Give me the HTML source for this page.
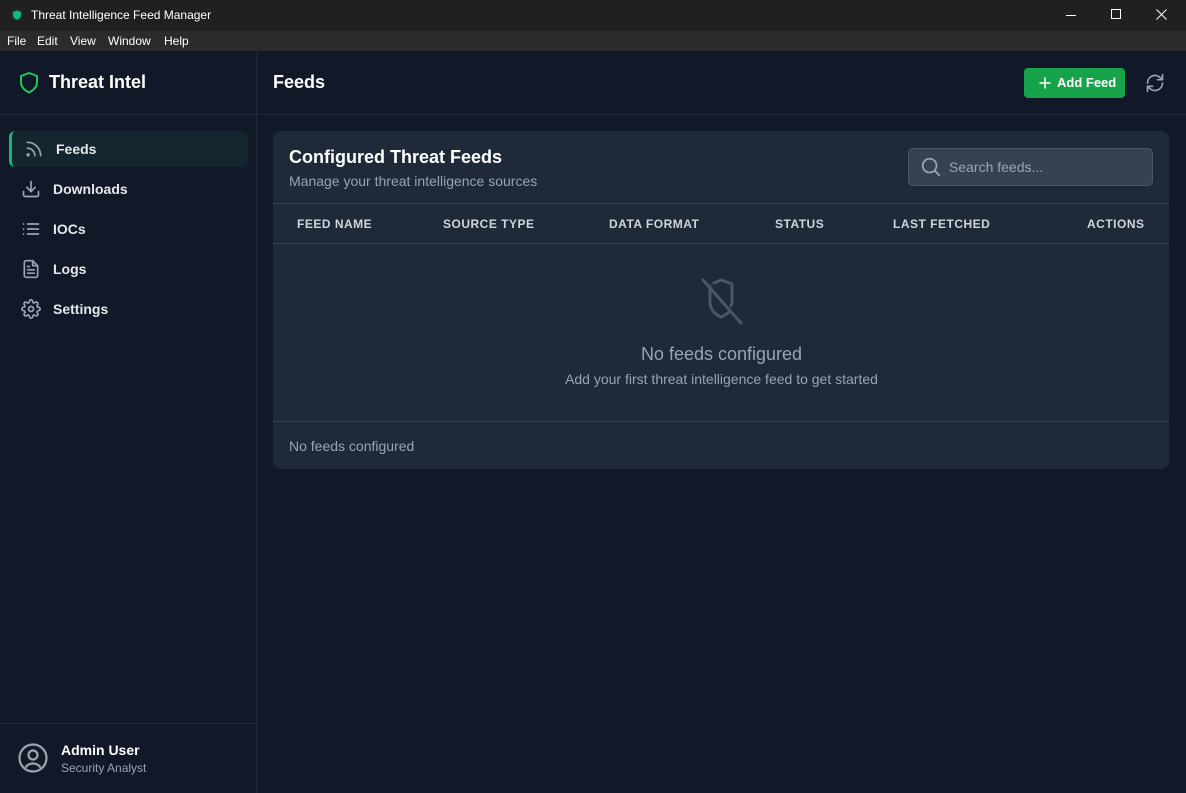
<!DOCTYPE html>
<html><head><meta charset="utf-8"><style>
*{margin:0;padding:0;box-sizing:border-box}
body{width:1186px;height:793px;overflow:hidden;background:#111827;font-family:"Liberation Sans",sans-serif;color:#fff;position:relative}
.tb{position:absolute;left:0;top:0;width:1186px;height:31px;background:#202020;font-size:12px;color:#fff}
.mb{position:absolute;left:0;top:31px;width:1186px;height:20px;background:#2b2b2e;font-size:12px;color:#fff}
.mb span{position:absolute;top:3px}
.sb{position:absolute;left:0;top:51px;width:257px;height:742px;border-right:1px solid #1f2937;background:#111827}
.main{position:absolute;left:257px;top:51px;right:0;bottom:0}
.nav{position:absolute;left:24px;font-size:14px;font-weight:bold;color:#e5e7eb}
.th{position:absolute;top:166px;font-size:12px;font-weight:bold;color:#d1d5db;letter-spacing:.5px}
</style></head><body>
<div class="tb">
<svg style="position:absolute;left:10px;top:8px" width="14" height="14" viewBox="0 0 14 14"><circle cx="7" cy="7" r="6.5" fill="#1e2a30"/><path d="M7 2.5 L11 4 V7 C11 9.5 9 11 7 11.8 C5 11 3 9.5 3 7 V4Z" fill="#10b981"/></svg>
<span style="position:absolute;left:31px;top:8px">Threat Intelligence Feed Manager</span>
<svg style="position:absolute;left:1066px;top:10px" width="12" height="12"><line x1="0" y1="5.5" x2="10" y2="5.5" stroke="#fff"/></svg>
<svg style="position:absolute;left:1111px;top:9px" width="12" height="12"><rect x="0.5" y="0.5" width="9" height="9" fill="none" stroke="#fff"/></svg>
<svg style="position:absolute;left:1156px;top:9px" width="12" height="12"><path d="M0.5 0.5L10.5 10.5M10.5 0.5L0.5 10.5" stroke="#fff"/></svg>
</div>
<div class="mb"><span style="left:7px">File</span><span style="left:37px">Edit</span><span style="left:70px">View</span><span style="left:108px">Window</span><span style="left:164px">Help</span></div>

<div class="sb">
<div style="position:absolute;left:0;top:63px;width:256px;border-top:1px solid #1f2937"></div>
<svg style="position:absolute;left:19px;top:20px" width="20" height="24" viewBox="0 0 20 24"><path d="M10 2 L18 5 V11 C18 16 14 19.5 10 21.5 C6 19.5 2 16 2 11 V5Z" fill="none" stroke="#22c55e" stroke-width="2" stroke-linejoin="round"/></svg>
<div style="position:absolute;left:49px;top:21px;font-size:18px;font-weight:bold">Threat Intel</div>
<div style="position:absolute;left:9px;top:80px;width:239px;height:36px;background:#13262d;border-radius:6px;border-left:3px solid #10b981"></div>
<svg style="position:absolute;left:24px;top:88px" width="20" height="20" viewBox="0 0 24 24" fill="none" stroke="#9ca3af" stroke-width="2" stroke-linecap="round"><path d="M4 11a9 9 0 0 1 9 9"/><path d="M4 4a16 16 0 0 1 16 16"/><circle cx="5" cy="19" r="1"/></svg>
<div class="nav" style="left:56px;top:90px">Feeds</div>
<svg style="position:absolute;left:21px;top:128px" width="20" height="20" viewBox="0 0 24 24" fill="none" stroke="#9ca3af" stroke-width="2" stroke-linecap="round" stroke-linejoin="round"><path d="M21 15v4a2 2 0 0 1-2 2H5a2 2 0 0 1-2-2v-4"/><path d="M7 10l5 5 5-5"/><path d="M12 15V3"/></svg>
<div class="nav" style="left:53px;top:130px">Downloads</div>
<svg style="position:absolute;left:21px;top:168px" width="20" height="20" viewBox="0 0 24 24" fill="none" stroke="#9ca3af" stroke-width="2" stroke-linecap="round"><path d="M8 6h13M8 12h13M8 18h13M3 6h.01M3 12h.01M3 18h.01"/></svg>
<div class="nav" style="left:53px;top:170px">IOCs</div>
<svg style="position:absolute;left:21px;top:208px" width="20" height="20" viewBox="0 0 24 24" fill="none" stroke="#9ca3af" stroke-width="2" stroke-linecap="round" stroke-linejoin="round"><path d="M14 2H6a2 2 0 0 0-2 2v16a2 2 0 0 0 2 2h12a2 2 0 0 0 2-2V8z"/><path d="M14 2v6h6M16 13H8M16 17H8M10 9H8"/></svg>
<div class="nav" style="left:53px;top:210px">Logs</div>
<svg style="position:absolute;left:21px;top:248px" width="20" height="20" viewBox="0 0 24 24" fill="none" stroke="#9ca3af" stroke-width="2"><circle cx="12" cy="12" r="3"/><path d="M19.4 15a1.65 1.65 0 0 0 .33 1.82l.06.06a2 2 0 1 1-2.83 2.830l-.06-.06a1.65 1.65 0 0 0-1.820-.33 1.65 1.65 0 0 0-1 1.51V21a2 2 0 0 1-4 0v-.09A1.65 1.65 0 0 0 9 19.4a1.65 1.65 0 0 0-1.82.33l-.06.06a2 2 0 1 1-2.83-2.83l.06-.06A1.65 1.65 0 0 0 4.68 15a1.65 1.65 0 0 0-1.51-1H3a2 2 0 0 1 0-4h.09A1.65 1.65 0 0 0 4.6 9a1.65 1.65 0 0 0-.33-1.82l-.06-.06a2 2 0 1 1 2.83-2.83l.06.06A1.65 1.65 0 0 0 9 4.68a1.65 1.65 0 0 0 1-1.51V3a2 2 0 0 1 4 0v.09a1.65 1.65 0 0 0 1 1.51 1.65 1.65 0 0 0 1.82-.33l.06-.06a2 2 0 1 1 2.83 2.83l-.06.06A1.65 1.65 0 0 0 19.4 9a1.65 1.65 0 0 0 1.51 1H21a2 2 0 0 1 0 4h-.09a1.65 1.65 0 0 0-1.51 1z"/></svg>
<div class="nav" style="left:53px;top:250px">Settings</div>
<div style="position:absolute;left:0;top:672px;width:256px;border-top:1px solid #1f2937"></div>
<svg style="position:absolute;left:17px;top:691px" width="32" height="32" viewBox="0 0 32 32" fill="none" stroke="#9ca3af" stroke-width="2.2"><circle cx="16" cy="16" r="13.5"/><circle cx="16" cy="13" r="4.5"/><path d="M8.5 25.5c2-3 4.5-4 7.5-4s5.5 1 7.5 4"/></svg>
<div style="position:absolute;left:61px;top:691px;font-size:14px;font-weight:bold">Admin User</div>
<div style="position:absolute;left:61px;top:710px;font-size:12px;color:#9ca3af">Security Analyst</div>
</div>

<div class="main">
<div style="position:absolute;left:0;top:63px;width:929px;border-top:1px solid #1f2937"></div>
<div style="position:absolute;left:16px;top:21px;font-size:18px;font-weight:bold">Feeds</div>
<div style="position:absolute;left:767px;top:17px;width:101px;height:30px;background:#16a34a;border-radius:4px;font-size:13px;font-weight:bold;color:#fff;line-height:30px;padding-left:33px">Add Feed</div>
<svg style="position:absolute;left:781px;top:25px" width="14" height="14"><path d="M7 1.5v11M1.5 7h11" stroke="#fff" stroke-width="1.6"/></svg>
<svg style="position:absolute;left:888px;top:22px" width="20" height="20" viewBox="0 0 24 24" fill="none" stroke="#9ca3af" stroke-width="2" stroke-linecap="round" stroke-linejoin="round"><path d="M21 2v6h-6"/><path d="M3 12a9 9 0 0 1 15-6.7L21 8"/><path d="M3 22v-6h6"/><path d="M21 12a9 9 0 0 1-15 6.7L3 16"/></svg>

<div style="position:absolute;left:16px;top:80px;width:896px;height:338px;background:#1f2937;border-radius:8px;overflow:hidden">
<div style="position:absolute;left:16px;top:16px;font-size:18px;font-weight:bold">Configured Threat Feeds</div>
<div style="position:absolute;left:16px;top:42px;font-size:14px;color:#9ca3af">Manage your threat intelligence sources</div>
<div style="position:absolute;left:635px;top:17px;width:245px;height:38px;background:#374151;border:1px solid #4b5563;border-radius:5px"></div>
<svg style="position:absolute;left:647px;top:25px" width="22" height="22" viewBox="0 0 24 24" fill="none" stroke="#9ca3af" stroke-width="2" stroke-linecap="round"><circle cx="10.5" cy="10.5" r="7.5"/><path d="M16 16l5 5"/></svg>
<div style="position:absolute;left:676px;top:28px;font-size:14px;color:#9ca3af">Search feeds...</div>
<div style="position:absolute;left:0;top:72px;width:896px;height:41px;border-top:1px solid #374151;border-bottom:1px solid #374151"></div>
</div>
<div class="th" style="left:40px">FEED NAME</div>
<div class="th" style="left:186px">SOURCE TYPE</div>
<div class="th" style="left:352px">DATA FORMAT</div>
<div class="th" style="left:518px">STATUS</div>
<div class="th" style="left:636px">LAST FETCHED</div>
<div class="th" style="left:830px">ACTIONS</div>
<svg style="position:absolute;left:440px;top:226px" width="48" height="48" viewBox="0 0 48 48" fill="none" stroke="#4b5563" stroke-width="3" stroke-linecap="round" stroke-linejoin="round"><path d="M6 3L44 46"/><path d="M13 9V25c0 8 6 13 11 15 3-1 6-3 8-5M17 6l7-3 11 4v17c0 2-.5 4-1 5"/></svg>
<div style="position:absolute;left:0;width:929px;top:293px;text-align:center;font-size:18px;color:#9ca3af">No feeds configured</div>
<div style="position:absolute;left:0;width:929px;top:320px;text-align:center;font-size:14px;color:#9ca3af">Add your first threat intelligence feed to get started</div>
<div style="position:absolute;left:16px;top:370px;width:896px;border-top:1px solid #374151"></div>
<div style="position:absolute;left:32px;top:387px;font-size:14px;color:#9ca3af">No feeds configured</div>
</div>
</body></html>
